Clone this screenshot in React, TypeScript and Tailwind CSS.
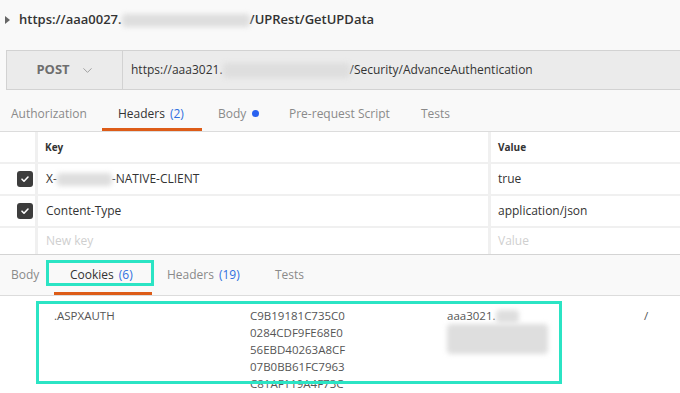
import { ChevronDown } from 'lucide-react'

const Blur = ({ w, h = 14 }: { w: number; h?: number }) => (
    <span
        className="inline-block bg-[#dedede] blur-[2.5px] rounded-sm align-middle"
        style={{ width: w, height: h }}
    />
)

const Check = () => (
    <div className="w-[16px] h-[16px] rounded-[3px] bg-[#3d3d3d] flex items-center justify-center">
        <svg width="10" height="10" viewBox="0 0 10 10" fill="none">
            <path d="M2 5.2l2 2L8 3" stroke="white" strokeWidth="1.6" strokeLinecap="round" strokeLinejoin="round" />
        </svg>
    </div>
)

const cookieValue = ['C9B19181C735C0', '0284CDF9FE68E0', '56EBD40263A8CF', '07B0BB61FC7963', 'C81AF119A4F73C']

export default function App() {
    return (
        <div className="w-[680px] h-[393px] overflow-hidden bg-[#f9f9f9] font-['Open_Sans',sans-serif] text-[#505050]">
            {/* history entry */}
            <div className="h-[40px] flex items-center pl-[5px] text-[13px] font-semibold text-[#333]">
                <svg width="6" height="8" viewBox="0 0 6 8" className="mr-[8px] mb-[1px]">
                    <path d="M0 0l5 4-5 4z" fill="#666" />
                </svg>
                <span>https://aaa0027.</span>
                <Blur w={128} h={13} />
                <span>/UPRest/GetUPData</span>
            </div>

            {/* url bar */}
            <div className="mt-[10px] ml-[6px] h-[40px] flex border border-r-0 border-[#d2d2d2] bg-[#ebebeb]">
                <div className="w-[116px] shrink-0 border-r border-[#d2d2d2] flex items-center justify-center gap-[10px] pl-[2px]">
                    <span className="text-[13px] font-bold text-[#6e6e6e]">POST</span>
                    <ChevronDown size={15} strokeWidth={1.5} className="text-[#9a9a9a]" />
                </div>
                <div className="flex items-center pl-[8px] text-[12px] text-[#333]">
                    <span>https://aaa3021.</span>
                    <Blur w={127} h={15} />
                    <span>/Security/AdvanceAuthentication</span>
                </div>
            </div>

            {/* request tabs */}
            <div className="mt-[5px] h-[37px] flex items-stretch border-b border-[#dcdcdc] text-[12px]">
                <div className="w-[102px] pl-[11px] flex items-center pt-[1px] text-[#8a8a8a]">Authorization</div>
                <div className="w-[100px] pl-[16px] flex items-center text-[#333] border-b-[3px] border-[#dd5c18] pt-[4px]">
                    Headers <span className="ml-[5px] text-[#2f6fe0]">(2)</span>
                </div>
                <div className="w-[87px] pl-[16px] flex items-center pt-[1px] text-[#8a8a8a]">
                    Body <span className="ml-[6px] w-[7px] h-[7px] rounded-full bg-[#2a62f0]" />
                </div>
                <div className="w-[132px] flex items-center pt-[1px] text-[#8a8a8a]">Pre-request Script</div>
                <div className="flex items-center pt-[1px] text-[#8a8a8a]">Tests</div>
            </div>

            {/* headers table */}
            <div className="grid grid-cols-[35px_450px_1fr] gap-x-[3px] gap-y-[2px] bg-[#f0f0f0] border-b border-[#d4d4d4]">
                <div className="h-[30px] bg-white" />
                <div className="h-[30px] bg-white flex items-center pl-[7px] text-[10px] font-bold text-[#333]">Key</div>
                <div className="h-[30px] bg-white flex items-center pl-[7px] text-[10px] font-bold text-[#333]">Value</div>

                <div className="h-[30px] bg-white flex items-center justify-end pr-[2px]"><Check /></div>
                <div className="h-[30px] bg-white flex items-center pl-[8px] text-[12px] text-[#333]">
                    X-<Blur w={55} h={13} />-NATIVE-CLIENT
                </div>
                <div className="h-[30px] bg-white flex items-center pl-[7px] text-[12px] text-[#333]">true</div>

                <div className="h-[30px] bg-white flex items-center justify-end pr-[2px]"><Check /></div>
                <div className="h-[30px] bg-white flex items-center pl-[8px] text-[12px] text-[#333]">Content-Type</div>
                <div className="h-[30px] bg-white flex items-center pl-[7px] text-[12px] text-[#333]">application/json</div>

                <div className="h-[26px] bg-white" />
                <div className="h-[26px] bg-white flex items-center pl-[8px] text-[12px] text-[#cfcfcf]">New key</div>
                <div className="h-[26px] bg-white flex items-center pl-[7px] text-[12px] text-[#cfcfcf]">Value</div>
            </div>

            {/* response tabs */}
            <div className="h-[41px] flex items-stretch border-b border-[#dcdcdc] text-[12px]">
                <div className="w-[54px] pl-[11px] flex items-center text-[#8a8a8a]">Body</div>
                <div className="relative w-[98px] pl-[16px] flex items-center text-[#333] border-b-[3px] border-[#dd5c18] pt-[3px]">
                    Cookies <span className="ml-[5px] text-[#2f6fe0]">(6)</span>
                    <span className="absolute left-[-8px] right-[-2px] top-[5px] h-[26px] border-[3px] border-[#2be4c4]" />
                </div>
                <div className="w-[123px] pl-[15px] flex items-center text-[#8a8a8a]">
                    Headers <span className="ml-[5px] text-[#2f6fe0]">(19)</span>
                </div>
                <div className="flex items-center text-[#8a8a8a]">Tests</div>
            </div>

            {/* cookies */}
            <div className="relative bg-white h-[100px] pt-[11px] text-[11.5px] leading-[17px] text-[#555]">
                <div className="flex">
                    <div className="w-[196px] pl-[54px]">.ASPXAUTH</div>
                    <div className="w-[197px] ml-[54px] flex flex-col">
                        {cookieValue.map(v => (
                            <span key={v}>{v}</span>
                        ))}
                    </div>
                    <div className="w-[197px] flex flex-col">
                        <span>aaa3021.<Blur w={23} h={13} /></span>
                        <Blur w={101} h={30} />
                    </div>
                    <div>/</div>
                </div>
                <span className="absolute left-[36px] top-[5px] w-[526px] h-[83px] border-[3px] border-[#2be4c4]" />
            </div>
        </div>
    )
}
